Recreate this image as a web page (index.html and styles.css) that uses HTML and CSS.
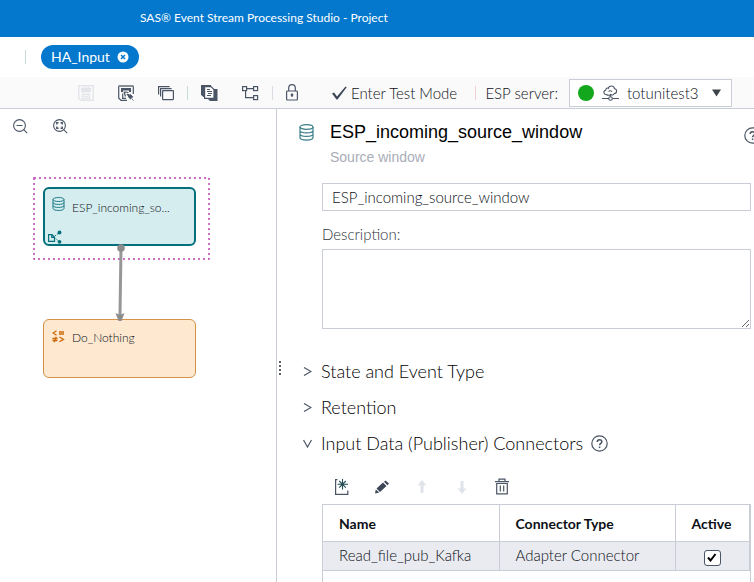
FILE: index.html
```html
<!DOCTYPE html>
<html lang="en">
<head>
<meta charset="utf-8">
<title>SAS Event Stream Processing Studio - Project</title>
<link rel="stylesheet" href="styles.css">
</head>
<body>
<header class="banner">SAS® Event Stream Processing Studio - Project</header>

<nav class="tabs">
  <span class="divider"></span>
  <div class="tab">
    <a href="#project">HA_Input</a>
    <button class="icon-button" aria-label="Close HA_Input">
      <svg width="12" height="12" viewBox="0 0 12 12"><circle cx="6" cy="6" r="5.5" fill="#fff"/><path d="M4 4l4 4M8 4l-4 4" stroke="#0378cd" stroke-width="1.5"/></svg>
    </button>
  </div>
</nav>

<div class="toolbar">
  <div class="tools">
    <button class="icon-button" aria-label="Save" disabled>
      <svg width="16" height="16" viewBox="0 0 16 16" fill="none" stroke="#e3e5ea"><path d="M.7.7h14.6v14.6H3L.7 13z" stroke-width="1.4"/><path d="M3.500 3h9v4h-9z" fill="#e3e5ea"/><path d="M4.500 9.500h7v4h-7z" stroke-width="1.300"/><path d="M6 11.500h4"/></svg>
    </button>
    <button class="icon-button" aria-label="Save as">
      <svg width="16" height="16" viewBox="0 0 16 16" fill="none" stroke="#4a5566"><path d="M9 15.300H3L.7 13V1M15.300 1v8" stroke-width="1.200"/><path d="M.5 1h15" stroke="#858f94" stroke-width="2"/><path d="M3 3h10v4h-2V5.500H5V7H3z" fill="#4a5566" stroke="none"/><path d="M8 13.300H4.700V8.500M6 6.500l1.500 5M7 7l3.500.5M9 9.500h2.500" stroke-width="1.200"/><path d="M9 9l3 3" stroke-width="1.500"/><path d="M12.500 9.500l2.300 2.300-2.300 2.300-2.300-2.300zM14 14l1.500 1.500" fill="#4a5566" stroke-width=".8"/></svg>
    </button>
    <button class="icon-button" aria-label="Copies">
      <svg width="16" height="16" viewBox="0 0 16 16" fill="none" stroke="#4a5566" stroke-width="1.200"><path d="M.6 9.500V1.600h11M2.600 11.500V3.600h11"/><rect x="4.600" y="5.600" width="10.800" height="9" rx=".5"/></svg>
    </button>
    <span class="divider"></span>
    <button class="icon-button" aria-label="Notes">
      <svg width="17" height="17" viewBox="0 0 17 17"><path d="M0 1h10v12H2.500L0 11z" fill="#4a5566"/><path d="M7 5h9.500v12H9l-2-2z" fill="#4a5566"/><path d="M3.600 2.600h6.400l3 3v8.800H3.600z" fill="#fff" stroke="#4a5566" stroke-width="1.200"/><path d="M6 5.500h3M6 7.500h5M7 9.500h4M6 11.500h4" stroke="#4a5566" stroke-width="1"/></svg>
    </button>
    <button class="icon-button" aria-label="Arrange">
      <svg width="17" height="16" viewBox="0 0 17 16" fill="none" stroke="#4a5566" stroke-width="1.200"><rect x=".6" y="1.600" width="4" height="4"/><rect x="11.600" y="1.600" width="4" height="4"/><rect x="11.600" y="10.600" width="4" height="4"/><path d="M5 3.600h6.500M3.600 5.600v7h8"/></svg>
    </button>
    <span class="divider divider-grey"></span>
    <button class="icon-button" aria-label="Lock">
      <svg width="12" height="17" viewBox="0 0 12 17" fill="none" stroke="#4a5566" stroke-width="1.200"><rect x=".6" y="7" width="10.800" height="9" rx=".8"/><path d="M2.700 7V4a3.300 3.300 0 0 1 6.600 0v3M6 10v3" /><circle cx="6" cy="10.800" r=".8" fill="#4a5566"/></svg>
    </button>
  </div>
  <button class="test-mode">
    <svg width="15" height="14" viewBox="0 0 15 14"><path d="M0 7.500l2-1 3 4L13.500.5l1.200.7L5.500 13.500H4.500z" fill="#3c4656"/></svg>
    Enter Test Mode
  </button>
  <span class="divider divider-pink"></span>
  <div class="server">
    <label for="server">ESP server:</label>
    <div class="server-box">
      <span class="status"></span>
      <svg width="17" height="16" viewBox="0 0 17 16" fill="none" stroke="#4a5566" stroke-width="1.100"><path d="M4.500 9.500c-3 .4-3.600-3.700-.8-4.300C3.800 3.300 5.300 2.600 6.300 3.300 7 .2 12 0 12.600 3.800c2.800.4 2.600 4.900-.6 4.700M4.500 9.500c1 1 3.300 1.100 4 0 1.200 1 3.500.6 3.500-1M6.500 6.500c1-1.200 3-1 3.500.3M8.500 9.500v2.200M0 13.500h6.700M10.300 13.500H17"/><circle cx="8.500" cy="13.500" r="1.800"/></svg>
      <select id="server"><option>totunitest3</option></select>
      <svg width="10" height="8" viewBox="0 0 10 8"><path d="M0 .5h9L4.500 7.500z" fill="#3f434a"/></svg>
    </div>
  </div>
</div>

<main class="workspace">
  <section class="canvas">
    <div class="zoom-tools">
      <button class="icon-button" aria-label="Zoom out">
        <svg width="15" height="15" viewBox="0 0 15 15" fill="none" stroke="#4a5566" stroke-width="1.100"><circle cx="6.500" cy="6.500" r="5.900"/><path d="M3.500 6.500h6M10.700 10.700l3.500 3.500"/></svg>
      </button>
      <button class="icon-button" aria-label="Zoom to fit">
        <svg width="15" height="15" viewBox="0 0 15 15" fill="none" stroke="#4a5566" stroke-width="1.100"><circle cx="6.500" cy="6.500" r="5.900"/><path d="M10.700 10.700l3.500 3.500"/><path d="M5.500 3.800H3.800v1.700M7.500 3.800h1.700v1.700M5.500 9.200H3.800V7.500M7.500 9.200h1.700V7.500" stroke-width="1.400"/></svg>
      </button>
    </div>
    <svg class="selection" width="177" height="83" viewBox="0 0 177 83"><rect x="1" y="1" width="175" height="81" fill="none" stroke="#c03fb4" stroke-width="1.500" stroke-dasharray="2 3"/></svg>
    <div class="node node-source">
      <svg width="13" height="14" viewBox="0 0 13 14" fill="none" stroke="#1b7a86" stroke-width="1"><ellipse cx="6.500" cy="2.500" rx="5.500" ry="2"/><path d="M1 2.500v9c0 2.600 11 2.600 11 0v-9M1 5.500c0 2.600 11 2.600 11 0M1 8.500c0 2.600 11 2.600 11 0"/></svg>
      <span>ESP_incoming_so...</span>
      <svg class="badge" width="14" height="14" viewBox="0 0 14 14" fill="none" stroke="#04707c" stroke-width="1.200"><path d="M.6 4.600h3.400l2.500 2.500v4.300H.6zM3.800 4.800v2.500h2.500"/><path d="M7 6l3-2.500M7.500 8.500l3 2.500" stroke-width=".9" stroke-dasharray="1.500 1"/><circle cx="11.500" cy="2.500" r="1.900" fill="#04707c" stroke="none"/><circle cx="11.500" cy="11.800" r="1.900" fill="#04707c" stroke="none"/></svg>
    </div>
    <div class="node node-compute">
      <svg width="13" height="13" viewBox="0 0 13 13" fill="none" stroke="#cb6b0c" stroke-width="1.300"><path d="M4.500.7L1 3l3.500 2.300M7 2h5M7 4h5M.5 8.500h5M.5 10.500h5M4.200 6.800l-2 5.500M7.500 7l4 2.400-4 2.400"/></svg>
      <span>Do_Nothing</span>
    </div>
    <svg class="edge" width="12" height="78" viewBox="0 0 12 78"><path d="M7 4L6 71" stroke="#979797" stroke-width="3"/><circle cx="7" cy="4" r="3.800" fill="#8c8c8c"/><path d="M1.500 69L6 71l4.500-2L7.500 77h-3z" fill="#8c8c8c"/></svg>
  </section>

  <section class="panel">
    <div class="splitter"><svg width="2" height="14" viewBox="0 0 2 14"><path d="M1 0v14" stroke="#5b6068" stroke-width="2" stroke-dasharray="2 2"/></svg></div>
    <div class="details">
      <div class="title">
        <svg width="15" height="17" viewBox="0 0 15 17" fill="none" stroke="#3d7f8b" stroke-width="1.200"><ellipse cx="7.500" cy="3" rx="6.500" ry="2.300"/><path d="M1 3v10.500c0 3.400 13 3.400 13 0V3M1 6.500c0 3.200 13 3.200 13 0M1 10c0 3.200 13 3.200 13 0"/></svg>
        <div class="title-text">
          <h1>ESP_incoming_source_window</h1>
          <p>Source window</p>
        </div>
        <button class="icon-button help" aria-label="Help">
          <svg width="17" height="17" viewBox="0 0 17 17" fill="none" stroke="#4a5566" stroke-width="1.200"><circle cx="8.500" cy="8.500" r="7.700"/><path d="M6.200 7c0-3.200 4.700-3 4.600-.3 0 1.700-2.200 1.700-2.200 3.600M8.600 11.500v1.500" stroke-width="1.500"/></svg>
        </button>
      </div>

      <div class="fields">
        <input class="name-field" type="text" aria-label="Name" value="ESP_incoming_source_window">
        <label for="description">Description:</label>
        <textarea id="description"></textarea>
      </div>

      <div class="sections">
        <button class="section"><svg width="9" height="9" viewBox="0 0 9 9"><path d="M1 .5l7 4-7 4" fill="none" stroke="#4a5566" stroke-width="1.200"/></svg>State and Event Type</button>
        <button class="section"><svg width="9" height="9" viewBox="0 0 9 9"><path d="M1 .5l7 4-7 4" fill="none" stroke="#4a5566" stroke-width="1.200"/></svg>Retention</button>
        <div class="section-row">
          <button class="section"><svg width="9" height="9" viewBox="0 0 9 9"><path d="M.5 1l4 7 4-7" fill="none" stroke="#4a5566" stroke-width="1.200"/></svg>Input Data (Publisher) Connectors</button>
          <button class="icon-button" aria-label="Connector help">
            <svg width="17" height="17" viewBox="0 0 17 17" fill="none" stroke="#4a5566" stroke-width="1.200"><circle cx="8.500" cy="8.500" r="7.700"/><path d="M6.200 7c0-3.200 4.700-3 4.600-.3 0 1.700-2.200 1.700-2.200 3.600M8.600 11.500v1.500" stroke-width="1.500"/></svg>
          </button>
        </div>
      </div>

      <div class="connector-tools">
        <button class="icon-button" aria-label="New connector">
          <svg width="16" height="16" viewBox="0 0 16 16" fill="none" stroke="#4a5566"><path d="M3.500.7H1.600v14.600h12.200V11.500" stroke-width="1.200"/><path d="M8.500 0v10.500M3.500 5.300h10.500M5.200 2l6.600 6.600M11.800 2L5.200 8.600" stroke="#264e57" stroke-width="1.100"/></svg>
        </button>
        <button class="icon-button" aria-label="Edit connector">
          <svg width="16" height="16" viewBox="0 0 16 16" fill="#3c4656"><path d="M2.500 9.500L9 3.500l3.500 3.500L6 13zM10 2.700l1.500-1.200 3.500 3-1.500 1.700zM1.800 10.500l3.500 3-4.300 1z"/></svg>
        </button>
        <button class="icon-button" aria-label="Move up" disabled>
          <svg width="16" height="16" viewBox="0 0 16 16" fill="#e0e3e9"><path d="M8 1l4.500 5.500h-3V14h-3V6.500h-3z"/></svg>
        </button>
        <button class="icon-button" aria-label="Move down" disabled>
          <svg width="16" height="16" viewBox="0 0 16 16" fill="#e0e3e9"><path d="M8 15l4.500-5.500h-3V2h-3v7.500h-3z"/></svg>
        </button>
        <button class="icon-button" aria-label="Delete connector">
          <svg width="16" height="17" viewBox="0 0 16 17" fill="none" stroke="#4a5566" stroke-width="1.200"><path d="M1 3.600h14M5 3.500V1.200h6v2.300M2.700 5.500v10.300h10.600V5.500zM6.300 7.500v6M9.700 7.500v6"/></svg>
        </button>
      </div>

      <div class="grid">
        <table>
          <thead><tr><th class="col-name">Name</th><th class="col-type">Connector Type</th><th class="col-active">Active</th></tr></thead>
          <tbody><tr><td>Read_file_pub_Kafka</td><td>Adapter Connector</td><td class="active-cell"><input type="checkbox" aria-label="Active" checked></td></tr></tbody>
        </table>
      </div>
    </div>
  </section>
</main>
</body>
</html>
```
FILE: styles.css
```css
* { box-sizing: border-box; }

body {
  margin: 0;
  height: 100vh;
  display: flex;
  flex-direction: column;
  overflow: hidden;
  background: #fff;
  color: #0c1017;
  font: 300 15px/20px Lato, "Liberation Sans", sans-serif;
}

button, input, select, textarea { font: inherit; color: inherit; }

button {
  border: 0;
  padding: 0;
  background: none;
  display: flex;
  align-items: center;
}

svg { display: block; flex: none; }

.divider { flex: none; width: 1px; height: 14px; background: #c5dbd9; }
.divider-grey { background: #dcdce4; }
.divider-pink { background: #f0cfd2; }

.banner {
  padding: 8px 140px 9px;
  background: #0378cd;
  color: #fff;
  font-size: 12px;
  font-weight: 400;
  white-space: nowrap;
}

.tabs {
  display: flex;
  align-items: center;
  gap: 15px;
  padding: 8px 25px;
}

.tab {
  display: flex;
  align-items: center;
  gap: 7px;
  height: 24px;
  padding: 0 10px;
  border-radius: 12px;
  background: #0378cd;
  color: #fff;
  font-size: 14px;
  font-weight: 400;
}

.tab a { color: inherit; text-decoration: none; }

.toolbar {
  display: flex;
  align-items: center;
  height: 32px;
  padding: 0 22px 0 78px;
  background: #fafafa;
  border-bottom: 1px solid #c9cdd6;
}

.tools { display: flex; align-items: center; gap: 24px; }
.tools .divider { margin: 0 -11px; }

.test-mode { gap: 4px; margin-left: 34px; white-space: nowrap; }
.toolbar > .divider { margin-left: auto; }

.server {
  display: flex;
  align-items: center;
  gap: 11px;
  margin-left: 9px;
}

.server label { white-space: nowrap; }

.server-box {
  display: flex;
  align-items: center;
  gap: 8px;
  width: 163px;
  height: 28px;
  padding: 0 9px 0 8px;
  background: #fff;
  border: 1px solid #c9cdd6;
}

.status { flex: none; width: 16px; height: 16px; border-radius: 50%; background: #12a71c; }

.server select {
  flex: 1;
  min-width: 0;
  padding: 0;
  border: 0;
  background: none;
  appearance: none;
}

.workspace { display: flex; flex: 1; min-height: 0; }

.canvas {
  position: relative;
  flex: none;
  width: 277px;
  border-right: 1px solid #c9cdd6;
}

.zoom-tools { display: flex; gap: 25px; padding: 10px 13px; }

.selection { position: absolute; left: 33px; top: 68px; }

.node {
  position: absolute;
  left: 43px;
  width: 153px;
  height: 59px;
  display: flex;
  align-items: flex-start;
  gap: 7px;
  border-radius: 6px;
  font-size: 12px;
  line-height: 14px;
}

.node-source {
  top: 78px;
  padding: 8px 7px;
  background: #d6edef;
  border: 2px solid #04707c;
}

.node-source span { margin-top: 4px; }
.node-compute span { margin-top: 1px; }

.node-compute {
  top: 210px;
  padding: 10px 8px;
  background: #fee8d0;
  border: 1px solid #d3924a;
}

.badge { position: absolute; left: 3px; bottom: 0; }
.edge { position: absolute; left: 114px; top: 135px; }

.panel { display: flex; flex: 1; min-width: 0; overflow: hidden; }
.splitter { flex: none; width: 22px; padding: 252px 0 0 2px; }
.details { flex: 1; min-width: 0; padding: 10px 3px 0 0; }

.title { display: flex; gap: 16px; margin-right: -10px; }
.title > svg { margin-top: 5px; }
.title-text { flex: 1; }
.title h1, .title p { margin: 0; font-family: "Liberation Sans", sans-serif; font-weight: 400; }
.title h1 { color: #000; font-size: 18px; line-height: 26px; }
.title p { color: #a9adb8; font-size: 14px; line-height: 24px; }
.help { align-self: flex-start; margin-top: 8px; }

.fields { display: flex; flex-direction: column; margin: 14px 0 0 23px; }
.fields label { margin: 13px 0 5px; color: #2d323c; }

.name-field { height: 28px; padding: 0 9px; border: 1px solid #c9cdd6; background: #fff; }

textarea { height: 80px; padding: 6px 9px; border: 1px solid #c9cdd6; background: #fff; }

.sections { display: flex; flex-direction: column; gap: 12px; margin: 30px 0 0 4px; }
.section { gap: 9px; font-size: 18px; line-height: 24px; color: #000; white-space: nowrap; }
.section-row { display: flex; align-items: center; gap: 8px; }

.connector-tools { display: flex; align-items: center; gap: 24px; margin: 23px 0 0 35px; }

.grid { height: 100px; margin: 9px 0 0 23px; border: 1px solid #c9cdd6; }

table { width: 100%; border-collapse: collapse; table-layout: fixed; }
th, td { padding: 0 16px; border-right: 1px solid #c9cdd6; border-bottom: 1px solid #c9cdd6; text-align: left; white-space: nowrap; }
th { height: 36px; padding-top: 2px; font-size: 14px; font-weight: 700; }
td { height: 29px; padding-bottom: 2px; background: #e9ebf0; }
.col-name, .col-type { width: 176px; }
.active-cell { text-align: center; padding-bottom: 0; }

input[type="checkbox"] {
  appearance: none;
  width: 17px;
  height: 16px;
  margin: 0;
  vertical-align: middle;
  border: 1px solid #4a5566;
  border-radius: 3px;
  background: #fff;
}

input[type="checkbox"]:checked {
  background: #fff url("data:image/svg+xml,%3Csvg xmlns='http://www.w3.org/2000/svg' viewBox='0 0 10 9'%3E%3Cpath d='M1 4.500l2.500 3L8.500 1' fill='none' stroke='%23000' stroke-width='2'/%3E%3C/svg%3E") center / 10px 9px no-repeat;
}
```
